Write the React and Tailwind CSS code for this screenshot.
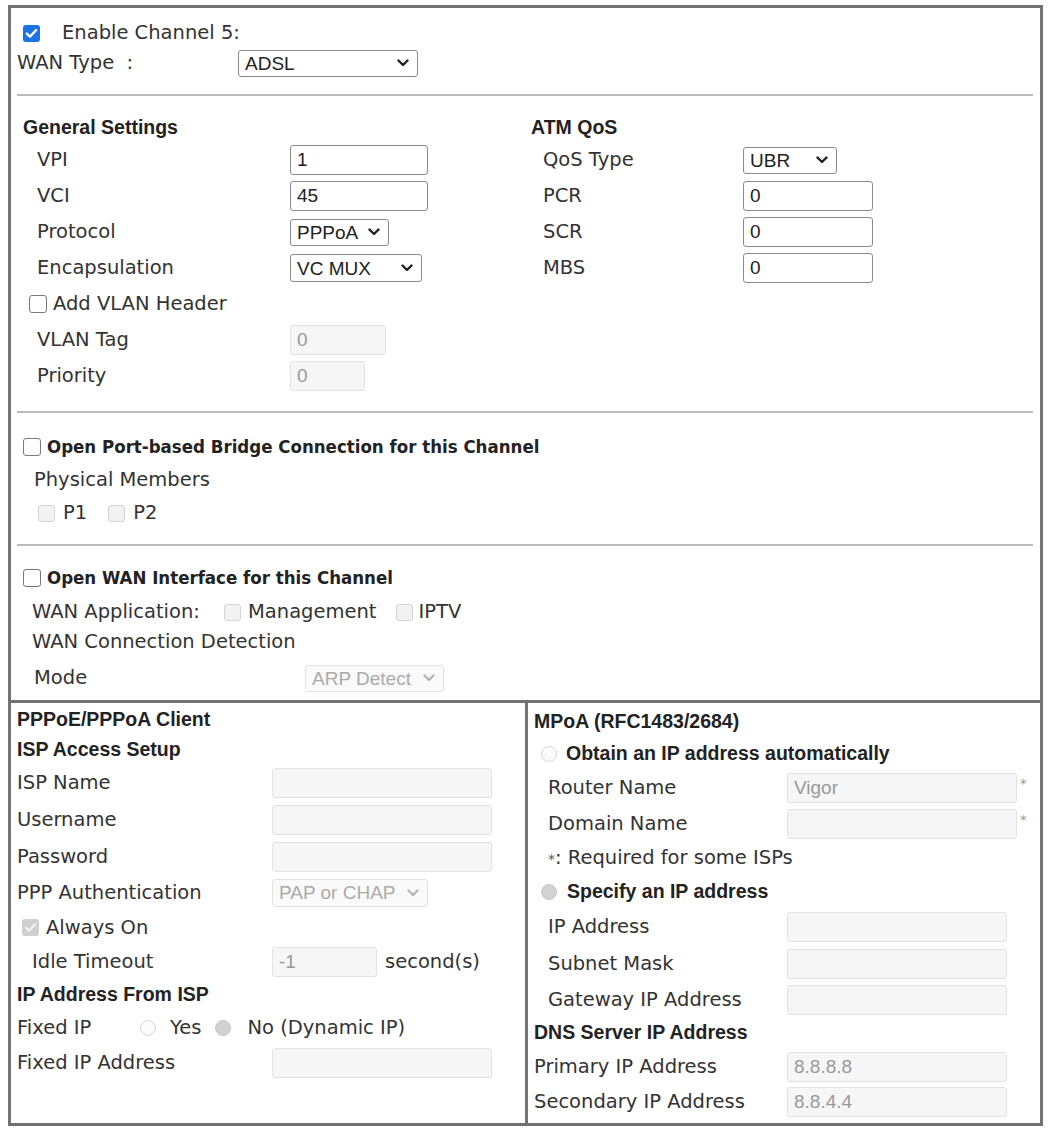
import React from 'react'

const lbl = "font-['DejaVu_Sans',Verdana,sans-serif] text-[19.5px] text-[#333] whitespace-nowrap"
const lblBold = "font-['DejaVu_Sans_Condensed','Liberation_Sans',Tahoma,sans-serif] font-bold text-[18.5px] text-[#222] whitespace-nowrap"
const hd = "font-['Liberation_Sans',Arial,sans-serif] font-bold text-[19.5px] text-[#222] whitespace-nowrap"
const arial = "font-['Liberation_Sans',Arial,sans-serif] text-[19px]"

function Chevron({ light }) {
  return (
    <svg width="12" height="8" viewBox="0 0 12 8" className="shrink-0">
      <path d="M1.5 1.5 L6 6 L10.5 1.5" fill="none" stroke={light ? '#b5b5b5' : '#222'} strokeWidth="2.4" strokeLinecap="round" strokeLinejoin="round" />
    </svg>
  )
}

function TextBox({ w, value = '', disabled }) {
  return (
    <input
      readOnly
      defaultValue={value}
      className={`${w} h-[30px] rounded-[3px] border pl-[6px] outline-none ${arial} ${
        disabled ? 'bg-[#f6f6f6] border-[#e2e2e2] text-[#999]' : 'bg-white border-[#8a8a8a] text-[#222]'
      }`}
    />
  )
}

function Select({ w, value, disabled, h = 'h-[28px]' }) {
  return (
    <div
      className={`${w} ${h} rounded-[3px] border flex items-center justify-between pl-[6px] pr-[8px] ${arial} ${
        disabled ? 'bg-[#fafafa] border-[#e2e2e2] text-[#aaa]' : 'bg-white border-[#8a8a8a] text-[#222]'
      }`}
    >
      <span className="leading-none">{value}</span>
      <Chevron light={disabled} />
    </div>
  )
}

function Check({ state }) {
  if (state === 'on') {
    return (
      <span className="w-[17px] h-[17px] rounded-[3px] bg-[#1a73e8] flex items-center justify-center shrink-0">
        <svg width="13" height="11" viewBox="0 0 13 11">
          <path d="M1.8 5.6 L5 8.6 L11.2 2" fill="none" stroke="#fff" strokeWidth="2.4" strokeLinecap="round" strokeLinejoin="round" />
        </svg>
      </span>
    )
  }
  if (state === 'disabledOn') {
    return (
      <span className="w-[17px] h-[17px] rounded-[3px] bg-[#cfcfcf] flex items-center justify-center shrink-0">
        <svg width="13" height="11" viewBox="0 0 13 11">
          <path d="M1.8 5.6 L5 8.6 L11.2 2" fill="none" stroke="#f2f2f2" strokeWidth="2.2" strokeLinecap="round" strokeLinejoin="round" />
        </svg>
      </span>
    )
  }
  if (state === 'disabled') {
    return <span className="w-[17px] h-[17px] rounded-[3px] border border-[#d4d4d4] bg-[#f2f2f2] shrink-0" />
  }
  return <span className="w-[18px] h-[18px] rounded-[3px] border border-[#7a7a7a] bg-white shrink-0" />
}

function Radio({ on }) {
  return on ? (
    <span className="w-[16px] h-[16px] rounded-full bg-[#d2d2d2] border border-[#c6c6c6] shrink-0" />
  ) : (
    <span className="w-[16px] h-[16px] rounded-full bg-[#fbfbfb] border border-[#d8d8d8] shrink-0" />
  )
}

function Row({ label, children, lw, h = 'h-[30px]' }) {
  return (
    <div className={`flex items-center ${h}`}>
      <div className={`${lw} ${lbl}`}>{label}</div>
      {children}
    </div>
  )
}

function Divider() {
  return <div className="ml-[6px] mr-[7px] h-[2px] bg-[#bcbcbc]" />
}

export default function App() {
  return (
    <div className="min-h-screen bg-white pl-[8px] pt-[5px]">
      <div className="w-[1035px] h-[1121px] border-[3px] border-[#727272] flex flex-col">
        {/* top settings */}
        <div className="h-[692px] pt-[10px]">
          <div className="flex items-center h-[30px] pl-[12px]">
            <Check state="on" />
            <span className={`${lbl} ml-[22px]`}>Enable Channel 5:</span>
          </div>
          <div className="flex items-center h-[30px] pl-[6px]">
            <div className={`w-[221px] ${lbl}`}>WAN Type&nbsp; :</div>
            <Select w="w-[180px]" value="ADSL" h="h-[27px]" />
          </div>
          <div className="mt-[16px]">
            <Divider />
          </div>

          <div className="flex mt-[17px]">
            <div className="w-[520px] pl-[12px]">
              <div className={`h-[30px] flex items-center ${hd}`}>General Settings</div>
              <div className="mt-[2px] flex flex-col gap-[6px] pl-[14px]">
                <Row label="VPI" lw="w-[253px]"><TextBox w="w-[138px]" value="1" /></Row>
                <Row label="VCI" lw="w-[253px]"><TextBox w="w-[138px]" value="45" /></Row>
                <Row label="Protocol" lw="w-[253px]"><Select w="w-[99px]" value="PPPoA" h="h-[27px]" /></Row>
                <Row label="Encapsulation" lw="w-[253px]"><Select w="w-[132px]" value="VC MUX" /></Row>
                <div className="flex items-center h-[30px] -ml-[8px]">
                  <Check />
                  <span className={`${lbl} ml-[6px]`}>Add VLAN Header</span>
                </div>
                <Row label="VLAN Tag" lw="w-[253px]"><TextBox w="w-[96px]" value="0" disabled /></Row>
                <Row label="Priority" lw="w-[253px]"><TextBox w="w-[75px]" value="0" disabled /></Row>
              </div>
            </div>
            <div className="flex-1">
              <div className={`h-[30px] flex items-center ${hd}`}>ATM QoS</div>
              <div className="mt-[2px] flex flex-col gap-[6px] pl-[12px]">
                <Row label="QoS Type" lw="w-[200px]"><Select w="w-[94px]" value="UBR" h="h-[27px]" /></Row>
                <Row label="PCR" lw="w-[200px]"><TextBox w="w-[130px]" value="0" /></Row>
                <Row label="SCR" lw="w-[200px]"><TextBox w="w-[130px]" value="0" /></Row>
                <Row label="MBS" lw="w-[200px]"><TextBox w="w-[130px]" value="0" /></Row>
              </div>
            </div>
          </div>

          <div className="mt-[20px]">
            <Divider />
          </div>

          {/* port-based bridge */}
          <div className="mt-[19px] flex flex-col gap-[3px]">
            <div className="flex items-center h-[30px] pl-[12px]">
              <Check />
              <span className={`${lblBold} ml-[6px]`}>Open Port-based Bridge Connection for this Channel</span>
            </div>
            <div className={`h-[30px] flex items-center pl-[23px] ${lbl}`}>Physical Members</div>
            <div className="flex items-center h-[30px] pl-[27px]">
              <Check state="disabled" />
              <span className={`${lbl} ml-[8px]`}>P1</span>
              <span className="ml-[21px] flex items-center">
                <Check state="disabled" />
              </span>
              <span className={`${lbl} ml-[8px]`}>P2</span>
            </div>
          </div>

          <div className="mt-[16px]">
            <Divider />
          </div>

          {/* WAN interface */}
          <div className="mt-[17px]">
            <div className="flex items-center h-[30px] pl-[12px]">
              <Check />
              <span className={`${lblBold} ml-[6px]`}>Open WAN Interface for this Channel</span>
            </div>
            <div className="flex items-center h-[30px] mt-[4px] pl-[21px]">
              <span className={`${lbl} w-[192px]`}>WAN Application:</span>
              <Check state="disabled" />
              <span className={`${lbl} ml-[7px]`}>Management</span>
              <span className="ml-[20px] flex items-center">
                <Check state="disabled" />
              </span>
              <span className={`${lbl} ml-[5px]`}>IPTV</span>
            </div>
            <div className={`h-[30px] flex items-center pl-[21px] ${lbl}`}>WAN Connection Detection</div>
            <div className="flex items-center h-[30px] mt-[6px] pl-[23px]">
              <span className={`${lbl} w-[271px]`}>Mode</span>
              <Select w="w-[139px]" value="ARP Detect" disabled h="h-[27px]" />
            </div>
          </div>
        </div>

        {/* bottom two columns */}
        <div className="flex flex-1 border-t-[3px] border-[#727272]">
          <div className="w-[517px] border-r-[3px] border-[#727272] pt-[3px] pl-[6px]">
            <div className={`h-[28px] flex items-center ${hd}`}>PPPoE/PPPoA Client</div>
            <div className={`h-[31px] flex items-center ${hd}`}>ISP Access Setup</div>
            <Row label="ISP Name" lw="w-[255px]" h="h-[36px]"><TextBox w="w-[220px]" disabled /></Row>
            <Row label="Username" lw="w-[255px]" h="h-[37px]"><TextBox w="w-[220px]" disabled /></Row>
            <Row label="Password" lw="w-[255px]" h="h-[37px]"><TextBox w="w-[220px]" disabled /></Row>
            <Row label="PPP Authentication" lw="w-[255px]" h="h-[35px]">
              <Select w="w-[156px]" value="PAP or CHAP" disabled />
            </Row>
            <div className="flex items-center h-[35px] pl-[5px]">
              <Check state="disabledOn" />
              <span className={`${lbl} ml-[7px]`}>Always On</span>
            </div>
            <div className="flex items-center h-[33px]">
              <span className={`${lbl} w-[255px] pl-[15px]`}>Idle Timeout</span>
              <TextBox w="w-[105px]" value="-1" disabled />
              <span className={`${lbl} ml-[8px]`}>second(s)</span>
            </div>
            <div className={`h-[33px] flex items-center ${hd}`}>IP Address From ISP</div>
            <div className="flex items-center h-[34px]">
              <span className={`${lbl} w-[123px]`}>Fixed IP</span>
              <Radio />
              <span className={`${lbl} ml-[14px]`}>Yes</span>
              <span className="ml-[14px] flex items-center">
                <Radio on />
              </span>
              <span className={`${lbl} ml-[16px]`}>No (Dynamic IP)</span>
            </div>
            <Row label="Fixed IP Address" lw="w-[255px]" h="h-[36px]"><TextBox w="w-[220px]" disabled /></Row>
          </div>

          <div className="flex-1 pt-[4px] pl-[6px]">
            <div className={`h-[30px] flex items-center ${hd}`}>MPoA (RFC1483/2684)</div>
            <div className="flex items-center h-[33px] pl-[7px]">
              <Radio />
              <span className={`${hd} ml-[9px]`}>Obtain an IP address automatically</span>
            </div>
            <div className="pl-[14px]">
              <Row label="Router Name" lw="w-[239px]" h="h-[36px]">
                <TextBox w="w-[230px]" value="Vigor" disabled />
                <span className="self-start mt-[4px] ml-[3px] text-[13px] text-[#999] font-['DejaVu_Sans',sans-serif]">*</span>
              </Row>
              <Row label="Domain Name" lw="w-[239px]" h="h-[35px]">
                <TextBox w="w-[230px]" disabled />
                <span className="self-start mt-[4px] ml-[3px] text-[13px] text-[#999] font-['DejaVu_Sans',sans-serif]">*</span>
              </Row>
              <div className={`h-[34px] flex items-center ${lbl}`}>
                <span className="text-[14px] self-start mt-[8px] text-[#555]">*</span>: Required for some ISPs
              </div>
            </div>
            <div className="flex items-center h-[34px] pl-[7px]">
              <Radio on />
              <span className={`${hd} ml-[10px]`}>Specify an IP address</span>
            </div>
            <div className="pl-[14px]">
              <Row label="IP Address" lw="w-[239px]" h="h-[36px]"><TextBox w="w-[220px]" disabled /></Row>
              <Row label="Subnet Mask" lw="w-[239px]" h="h-[38px]"><TextBox w="w-[220px]" disabled /></Row>
              <Row label="Gateway IP Address" lw="w-[239px]" h="h-[34px]"><TextBox w="w-[220px]" disabled /></Row>
            </div>
            <div className={`h-[32px] flex items-center ${hd}`}>DNS Server IP Address</div>
            <Row label="Primary IP Address" lw="w-[253px]" h="h-[35px]"><TextBox w="w-[220px]" value="8.8.8.8" disabled /></Row>
            <Row label="Secondary IP Address" lw="w-[253px]" h="h-[36px]"><TextBox w="w-[220px]" value="8.8.4.4" disabled /></Row>
          </div>
        </div>
      </div>
    </div>
  )
}
